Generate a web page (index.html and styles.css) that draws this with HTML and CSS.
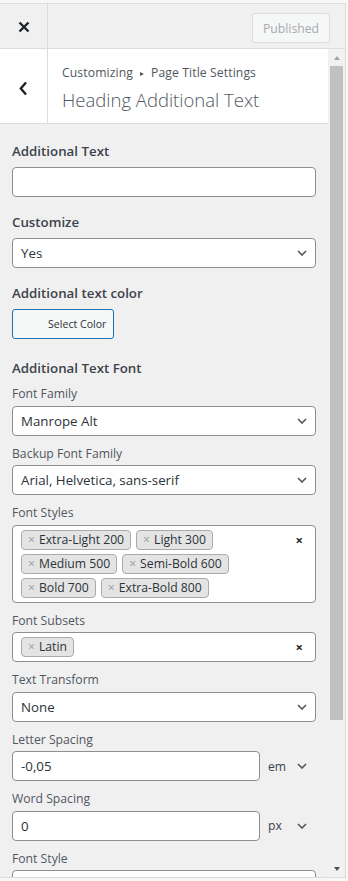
FILE: index.html
```html
<!DOCTYPE html>
<html>
<head>
    <title>Customize: Heading Additional Text</title>
    <link rel="stylesheet" href="styles.css">
</head>
<body>
    <div class="customizer">
        <div class="topbar">
            <button class="close-btn" title="Close">
                <svg width="12" height="12" viewBox="0 0 12 12"><path d="M1.5 1.5l9 9M10.5 1.5l-9 9" stroke="#1d2327" stroke-width="2.4"/></svg>
            </button>
            <div class="topbar-actions">
                <button class="publish-btn" disabled>Published</button>
            </div>
        </div>

        <div class="panel">
            <div class="panel-body">
                <div class="section-head">
                    <button class="back-btn" title="Back">
                        <svg width="9" height="15" viewBox="0 0 9 15"><path d="M7 1.5L1.8 7.5 7 13.5" fill="none" stroke="#1d2327" stroke-width="2.4"/></svg>
                    </button>
                    <div class="section-titles">
                        <span class="crumb">Customizing<span class="crumb-sep"></span>Page Title Settings</span>
                        <h3>Heading Additional Text</h3>
                    </div>
                </div>

                <ul class="controls">
                    <li class="control">
                        <label class="control-title">Additional Text</label>
                        <input type="text" class="text-input">
                    </li>
                    <li class="control">
                        <label class="control-title">Customize</label>
                        <div class="select">
                            <span>Yes</span>
                            <svg width="10" height="6" viewBox="0 0 10 6"><path d="M1 1l4 4 4-4" fill="none" stroke="#50575e" stroke-width="1.6"/></svg>
                        </div>
                    </li>
                    <li class="control control-color">
                        <label class="control-title">Additional text color</label>
                        <button class="color-btn">Select Color</button>
                    </li>
                    <li class="control">
                        <label class="control-title">Additional Text Font</label>

                        <div class="field">
                            <span class="field-label">Font Family</span>
                            <div class="select">
                                <span>Manrope Alt</span>
                                <svg width="10" height="6" viewBox="0 0 10 6"><path d="M1 1l4 4 4-4" fill="none" stroke="#50575e" stroke-width="1.6"/></svg>
                            </div>
                        </div>
                        <div class="field">
                            <span class="field-label">Backup Font Family</span>
                            <div class="select">
                                <span>Arial, Helvetica, sans-serif</span>
                                <svg width="10" height="6" viewBox="0 0 10 6"><path d="M1 1l4 4 4-4" fill="none" stroke="#50575e" stroke-width="1.6"/></svg>
                            </div>
                        </div>
                        <div class="field">
                            <span class="field-label">Font Styles</span>
                            <div class="multi">
                                <div class="tags">
                                    <span class="tag"><span class="tag-remove">×</span>Extra-Light 200</span>
                                    <span class="tag"><span class="tag-remove">×</span>Light 300</span>
                                    <span class="tag"><span class="tag-remove">×</span>Medium 500</span>
                                    <span class="tag"><span class="tag-remove">×</span>Semi-Bold 600</span>
                                    <span class="tag"><span class="tag-remove">×</span>Bold 700</span>
                                    <span class="tag"><span class="tag-remove">×</span>Extra-Bold 800</span>
                                </div>
                                <span class="clear">×</span>
                            </div>
                        </div>
                        <div class="field">
                            <span class="field-label">Font Subsets</span>
                            <div class="multi">
                                <div class="tags">
                                    <span class="tag"><span class="tag-remove">×</span>Latin</span>
                                </div>
                                <span class="clear">×</span>
                            </div>
                        </div>
                        <div class="field">
                            <span class="field-label">Text Transform</span>
                            <div class="select">
                                <span>None</span>
                                <svg width="10" height="6" viewBox="0 0 10 6"><path d="M1 1l4 4 4-4" fill="none" stroke="#50575e" stroke-width="1.6"/></svg>
                            </div>
                        </div>
                        <div class="field">
                            <span class="field-label">Letter Spacing</span>
                            <div class="unit-row">
                                <input type="text" class="text-input" value="-0,05">
                                <span class="unit">em</span>
                                <svg width="10" height="6" viewBox="0 0 10 6"><path d="M1 1l4 4 4-4" fill="none" stroke="#50575e" stroke-width="1.6"/></svg>
                            </div>
                        </div>
                        <div class="field">
                            <span class="field-label">Word Spacing</span>
                            <div class="unit-row">
                                <input type="text" class="text-input" value="0">
                                <span class="unit">px</span>
                                <svg width="10" height="6" viewBox="0 0 10 6"><path d="M1 1l4 4 4-4" fill="none" stroke="#50575e" stroke-width="1.6"/></svg>
                            </div>
                        </div>
                        <div class="field">
                            <span class="field-label">Font Style</span>
                            <div class="select">
                                <span></span>
                                <svg width="10" height="6" viewBox="0 0 10 6"><path d="M1 1l4 4 4-4" fill="none" stroke="#50575e" stroke-width="1.6"/></svg>
                            </div>
                        </div>
                    </li>
                </ul>
            </div>

            <!-- classic scrollbar -->
            <div class="scrollbar">
                <span class="scroll-btn"><span class="arrow-up"></span></span>
                <span class="scroll-thumb"></span>
                <span class="scroll-track"></span>
                <span class="scroll-btn"><span class="arrow-down"></span></span>
            </div>
        </div>
    </div>
</body>
</html>
```

FILE: styles.css
```css
* { box-sizing: border-box; }
body { margin: 0; background: #f6f7f7; font-family: "Open Sans", "Noto Sans", sans-serif; font-size: 12.2px; color: #50575e; }

.customizer { width: 346px; margin-top: 3px; background: #f0f0f1; border: 1px solid #dcdcde; border-left: none; }

.topbar { display: flex; height: 45px; border-bottom: 1px solid #dcdcde; }
.close-btn { width: 48px; padding: 2px 0 0; border: none; border-right: 1px solid #dcdcde; background: none; display: flex; align-items: center; justify-content: center; }
.topbar-actions { flex: 1; display: flex; justify-content: flex-end; align-items: flex-start; padding: 9px 15px 0 0; }
.publish-btn { height: 30px; padding: 0 10px; border: 1px solid #dcdcde; border-radius: 3px; background: #f6f7f7; color: #a7aaad; font: inherit; }

.panel { display: flex; height: 828px; }
.panel-body { flex: 1; overflow: hidden; }

.section-head { display: flex; background: #fff; border-bottom: 1px solid #dcdcde; }
.back-btn { width: 48px; padding: 4px 0 0; border: none; border-right: 1px solid #dcdcde; background: none; display: flex; align-items: center; justify-content: center; }
.section-titles { padding: 15px 12px 11px 14px; }
.crumb { display: block; line-height: 18px; letter-spacing: 0.1px; }
.crumb-sep { display: inline-block; margin: 0 7px; border-top: 2.5px solid transparent; border-bottom: 2.5px solid transparent; border-left: 4px solid #50575e; vertical-align: 1px; }
.section-titles h3 { margin: 6px 0 0; font-size: 18.5px; font-weight: 300; line-height: 24px; color: #50575e; }

.controls { list-style: none; margin: 0; padding: 14px 12px 0; }
.control { margin-bottom: 12px; }
.control-color { margin-bottom: 16px; }
.control-title { display: block; margin-bottom: 4px; padding-top: 1px; font-size: 13.3px; font-weight: 600; line-height: 24px; color: #3c434a; }

.field { margin-bottom: 8px; }
.field-label { display: block; margin-bottom: 2.5px; padding-top: 1px; line-height: 18px; }

.text-input { display: block; width: 100%; height: 30px; padding: 0 8px; border: 1px solid #8c8f94; border-radius: 4px; background: #fff; font: inherit; font-size: 13.3px; color: #2c3338; }
.select { display: flex; align-items: center; height: 30px; padding: 0 8px; border: 1px solid #8c8f94; border-radius: 4px; background: #fff; font-size: 13.3px; color: #2c3338; }
.select span { flex: 1; }

.color-btn { display: block; width: 102px; height: 30px; padding: 0 0 0 35px; border: 1px solid #2271b1; border-radius: 3px; background: #f6f7f7; color: #2c3338; font: inherit; font-size: 10.6px; text-align: left; white-space: nowrap; }

.multi { display: flex; align-items: flex-start; padding: 4px 12px 4px 8px; border: 1px solid #8c8f94; border-radius: 4px; background: #fff; }
.tags { flex: 1; display: flex; flex-wrap: wrap; gap: 4px 5px; }
.tag { display: flex; align-items: center; height: 20px; padding: 0 6px; border: 1px solid #aaa; border-radius: 4px; background: #e4e4e4; color: #2c3338; line-height: 18px; }
.tag-remove { margin-right: 4px; color: #999; }
.clear { margin-left: 6px; font-size: 13px; font-weight: bold; line-height: 20px; color: #1d2327; }

.unit-row { display: flex; align-items: center; }
.unit-row .text-input { width: 248px; }
.unit { margin-left: 8px; color: #3c434a; }
.unit-row svg { margin-left: auto; margin-right: 9px; }

.scrollbar { width: 17px; display: flex; flex-direction: column; background: #f1f1f1; }
.scroll-btn { height: 17px; display: flex; align-items: center; justify-content: center; }
.arrow-up { border-left: 3.5px solid transparent; border-right: 3.5px solid transparent; border-bottom: 4px solid #a3a3a3; }
.arrow-down { border-left: 3.5px solid transparent; border-right: 3.5px solid transparent; border-top: 4px solid #505050; }
.scroll-thumb { height: 654px; margin: 0 2px; background: #c1c1c1; }
.scroll-track { flex: 1; }
```
